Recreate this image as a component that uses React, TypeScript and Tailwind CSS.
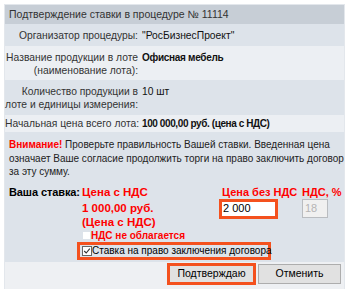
import React from 'react';

const font = { fontFamily: '"Liberation Sans", Arial, sans-serif' };

const InfoRow: React.FC<{ label: React.ReactNode; value: React.ReactNode; light?: boolean; pad: string }> = ({
  label,
  value,
  light,
  pad
}) => (
  <div className={`flex text-[10.3px] ${light ? 'bg-[#eceff3]' : 'bg-[#dde3ea]'} ${pad}`}>
    <div className="w-[133px] shrink-0 text-right text-[#333]">{label}</div>
    <div className="pl-[4px] text-[#111]">{value}</div>
  </div>
);

export default function App() {
  return (
    <div
      className="w-[350px] h-[289px] overflow-hidden bg-white pt-[4px] text-[10px] leading-[13px] whitespace-nowrap"
      style={font}
    >
      <div className="ml-[4px] w-[341px] border border-[#e3e7ec]">
        <div className="h-[19px] bg-[#c7ced6] pl-[4px] flex items-center text-[10.5px] text-[#333]">
          Подтверждение ставки в процедуре № 11114
        </div>

        <InfoRow pad="pt-[5px] pb-[4px]" label="Организатор процедуры:" value={'"РосБизнесПроект"'} />
        <InfoRow
          light
          pad="pt-[5px] pb-[3px]"
          label={
            <>
              Название продукции в лоте
              <br />
              (наименование лота):
            </>
          }
          value={<b className="text-[10px] tracking-[-0.3px]">Офисная мебель</b>}
        />
        <InfoRow
          pad="pt-[5px] pb-[4px]"
          label={
            <>
              Количество продукции в
              <br />
              лоте и единицы измерения:
            </>
          }
          value="10 шт"
        />
        <InfoRow
          light
          pad="pt-[2px] pb-[2px]"
          label="Начальная цена всего лота:"
          value={<b className="text-[10px] tracking-[-0.4px]">100 000,00 руб. (цена с НДС)</b>}
        />

        <div className="bg-[#dde3ea] pl-[4px] pt-[6px] pb-[2px]">
          <div className="leading-[13.5px] text-[#222]">
            <b className="text-[#ff0000]">Внимание!</b> Проверьте правильность Вашей ставки. Введенная цена
            <br />
            означает Ваше согласие продолжить торги на право заключить договор
            <br />
            за эту сумму.
          </div>

          <div className="mt-[6px] flex items-end leading-[14px]">
            <div className="w-[73px] shrink-0 text-[11px] tracking-[-0.1px] font-bold text-black">Ваша ставка:</div>
            <div className="w-[137px] shrink-0 text-[11.5px] font-bold text-[#ff0000]">Цена с НДС</div>
            <div className="w-[83px] shrink-0 pl-[3px] text-[11px] font-bold text-[#ff0000]">Цена без НДС</div>
            <div className="text-[11px] font-bold text-[#ff0000]">НДС, %</div>
          </div>

          <div className="flex">
            <div className="w-[73px] shrink-0" />
            <div className="w-[137px] shrink-0 pt-[2px]">
              <div className="w-[69px] text-center text-[11.5px] leading-[14px] font-bold text-[#ff0000]">
                1 000,00 руб.
                <br />
                (Цена с НДС)
              </div>
            </div>
            <div className="w-[83px] shrink-0">
              <div className="w-[59px] h-[20px] border-[3px] border-[#f4511e] bg-white flex items-center pl-[1px] text-[11px] text-black">
                2 000
              </div>
            </div>
            <div className="w-[26px] h-[19px] border border-[#b9bcc0] bg-[#f0f0f0] flex items-center pl-[2px] text-[11px] text-[#b5b5b5]">
              18
            </div>
          </div>

          <div className="ml-[74px] flex items-center h-[14px]">
            <span className="w-[7px] h-[7px] bg-white" />
            <span className="ml-[1px] font-bold text-[#ff0000]">НДС не облагается</span>
          </div>

          <div className="ml-[68px] mt-[-1px] w-[194px] h-[18px] border-[3px] border-[#f4511e] flex items-center pl-[2px]">
            <span className="w-[10px] h-[10px] border border-[#666] bg-white flex items-center justify-center shrink-0">
              <svg viewBox="0 0 10 10" className="w-[8px] h-[8px]">
                <path d="M1.5 5 L4 7.5 L8.5 2" fill="none" stroke="#333" strokeWidth="1.4" />
              </svg>
            </span>
            <span className="text-black">Ставка на право заключения договора</span>
          </div>
        </div>

        <div className="bg-[#eef0f3] h-[27px] flex items-start justify-end pr-[3px] pt-[1px]">
          <button className="w-[89px] h-[22px] border-[3px] border-[#f4511e] bg-[#e1e1e1] text-[10.5px] text-black">
            Подтверждаю
          </button>
          <button className="ml-[2px] mt-[1px] w-[83px] h-[20px] border border-[#adadad] bg-[#e1e1e1] text-[10.5px] text-black">
            Отменить
          </button>
        </div>
      </div>
    </div>
  );
}
